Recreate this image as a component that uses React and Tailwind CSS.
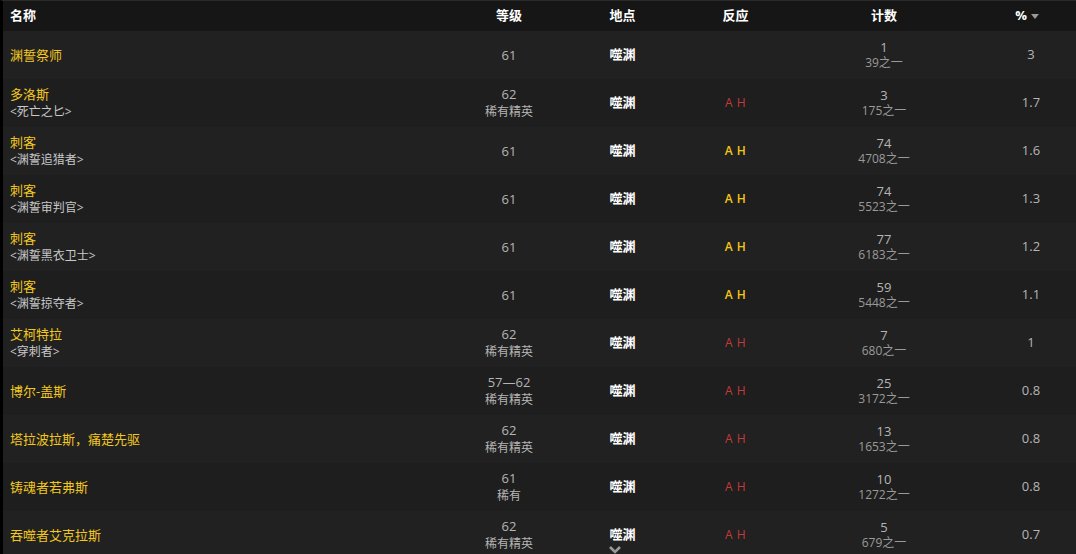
import React from "react";

const rows = [
  { name: "渊誓祭师", sub: null, lvl: "61", cls: null, rx: null, c: "1", of: "39之一", p: "3" },
  { name: "多洛斯", sub: "<死亡之匕>", lvl: "62", cls: "稀有精英", rx: "red", c: "3", of: "175之一", p: "1.7" },
  { name: "刺客", sub: "<渊誓追猎者>", lvl: "61", cls: null, rx: "yellow", c: "74", of: "4708之一", p: "1.6" },
  { name: "刺客", sub: "<渊誓审判官>", lvl: "61", cls: null, rx: "yellow", c: "74", of: "5523之一", p: "1.3" },
  { name: "刺客", sub: "<渊誓黑衣卫士>", lvl: "61", cls: null, rx: "yellow", c: "77", of: "6183之一", p: "1.2" },
  { name: "刺客", sub: "<渊誓掠夺者>", lvl: "61", cls: null, rx: "yellow", c: "59", of: "5448之一", p: "1.1" },
  { name: "艾柯特拉", sub: "<穿刺者>", lvl: "62", cls: "稀有精英", rx: "red", c: "7", of: "680之一", p: "1" },
  { name: "博尔-盖斯", sub: null, lvl: "57—62", cls: "稀有精英", rx: "red", c: "25", of: "3172之一", p: "0.8" },
  { name: "塔拉波拉斯，痛楚先驱", sub: null, lvl: "62", cls: "稀有精英", rx: "red", c: "13", of: "1653之一", p: "0.8" },
  { name: "铸魂者若弗斯", sub: null, lvl: "61", cls: "稀有", rx: "red", c: "10", of: "1272之一", p: "0.8" },
  { name: "吞噬者艾克拉斯", sub: null, lvl: "62", cls: "稀有精英", rx: "red", c: "5", of: "679之一", p: "0.7" },
];

const font = { fontFamily: '"Open Sans", "Noto Sans CJK SC", sans-serif' };

export default function App() {
  return (
    <div className="relative w-[1076px] h-[554px] overflow-hidden bg-[#1f1f1f] border-l-[3px] border-t border-l-black border-t-[#2a2a2a]" style={font}>
      <div className="grid grid-cols-[449px_114px_113px_113px_184px_1fr] h-[30px] items-center bg-[#161616] text-[13px] font-bold text-white">
        <div className="pl-[7px]">名称</div>
        <div className="text-center">等级</div>
        <div className="text-center">地点</div>
        <div className="text-center">反应</div>
        <div className="text-center">计数</div>
        <div className="flex items-center justify-center gap-[4px] pl-[2px]">
          <span>%</span>
          <svg width="8" height="5" viewBox="0 0 8 5"><path d="M0 0h8L4 5z" fill="#9a9a9a" /></svg>
        </div>
      </div>
      {rows.map((r, i) => (
        <div
          key={i}
          className={`grid grid-cols-[449px_114px_113px_113px_184px_1fr] h-[48px] items-center ${i % 2 === 0 ? "bg-[#212121]" : "bg-[#1e1e1e]"}`}
        >
          <div className="pl-[7px] flex flex-col leading-[17px]">
            <span className="text-[13px] text-[#f2c81f]">{r.name}</span>
            {r.sub && <span className="text-[12px] text-[#c8c8c8]">{r.sub}</span>}
          </div>
          <div className="flex flex-col items-center leading-[17px] text-[12px] text-[#b5b5b5]">
            <span className="text-[13px]">{r.lvl}</span>
            {r.cls && <span>{r.cls}</span>}
          </div>
          <div className="text-center text-[13px] font-bold text-white">噬渊</div>
          <div className="text-center text-[12px] tracking-[0.5px]">
            {r.rx === "red" && <span className="text-[#c23a3a]">A H</span>}
            {r.rx === "yellow" && <span className="text-[#f5c518] font-semibold">A H</span>}
          </div>
          <div className="flex flex-col items-center leading-[16px]">
            <span className="text-[13px] text-[#b5b5b5]">{r.c}</span>
            <span className="text-[12px] text-[#9a9a9a]">{r.of}</span>
          </div>
          <div className="text-center text-[13px] text-[#b5b5b5] pl-[10px]">{r.p}</div>
        </div>
      ))}
      <div className="absolute left-[605px] top-[544px]">
        <svg width="14" height="10" viewBox="0 0 14 10"><path d="M2 2l5 5 5-5" stroke="#9a9a9a" strokeWidth="2.5" fill="none" /></svg>
      </div>
    </div>
  );
}
